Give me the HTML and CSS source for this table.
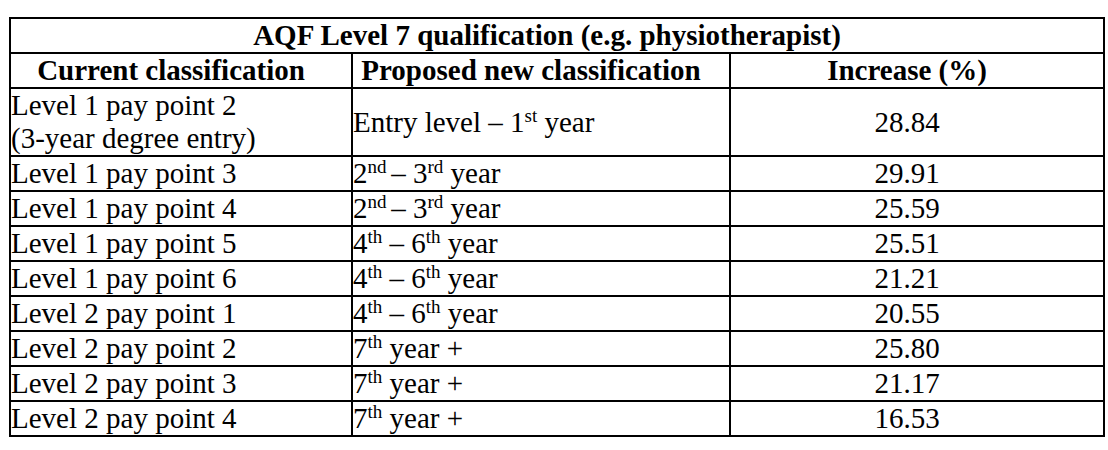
FILE: index.html
```html
<!DOCTYPE html>
<html>
<head>
<meta charset="utf-8">
<link rel="stylesheet" href="styles.css">
</head>
<body>
<div class="page">
<table class="pay">
<colgroup>
<col class="c1"><col class="c2"><col class="c3">
</colgroup>
<tr><th colspan="3" class="title">AQF Level 7 qualification (e.g. physiotherapist)</th></tr>
<tr><th>Current classification</th><th>Proposed new classification</th><th>Increase (%)</th></tr>
<tr><td>Level 1 pay point 2<br>(3-year degree entry)</td><td>Entry level – 1<sup>st</sup> year</td><td class="num">28.84</td></tr>
<tr><td>Level 1 pay point 3</td><td>2<sup>nd </sup>– 3<sup>rd</sup> year</td><td class="num">29.91</td></tr>
<tr><td>Level 1 pay point 4</td><td>2<sup>nd </sup>– 3<sup>rd</sup> year</td><td class="num">25.59</td></tr>
<tr><td>Level 1 pay point 5</td><td>4<sup>th</sup> – 6<sup>th</sup> year</td><td class="num">25.51</td></tr>
<tr><td>Level 1 pay point 6</td><td>4<sup>th</sup> – 6<sup>th</sup> year</td><td class="num">21.21</td></tr>
<tr><td>Level 2 pay point 1</td><td>4<sup>th</sup> – 6<sup>th</sup> year</td><td class="num">20.55</td></tr>
<tr><td>Level 2 pay point 2</td><td>7<sup>th</sup> year +</td><td class="num">25.80</td></tr>
<tr><td>Level 2 pay point 3</td><td>7<sup>th</sup> year +</td><td class="num">21.17</td></tr>
<tr><td>Level 2 pay point 4</td><td>7<sup>th</sup> year +</td><td class="num">16.53</td></tr>
</table>
</div>
</body>
</html>
```
FILE: styles.css
```css
html, body {
  margin: 0;
  padding: 0;
  background: #fff;
}
.page {
  padding: 17px 0 0 9px;
}
.pay {
  border-collapse: collapse;
  table-layout: fixed;
  width: 1094px;
  font-family: "Liberation Serif", "Times New Roman", serif;
  font-size: 29px;
  line-height: 33px;
  color: #000;
}
.c1 { width: 342px; }
.c2 { width: 378px; }
.c3 { width: 374px; }
.pay th, .pay td {
  border: 2px solid #000;
  padding: 0 20px 0 0;
  vertical-align: middle;
  white-space: nowrap;
}
.pay th {
  font-weight: bold;
  text-align: center;
}
.pay td {
  text-align: left;
  font-weight: normal;
}
.pay td.num {
  text-align: center;
}
.pay sup {
  font-size: 19px;
  line-height: 0;
  vertical-align: 10px;
}
```
